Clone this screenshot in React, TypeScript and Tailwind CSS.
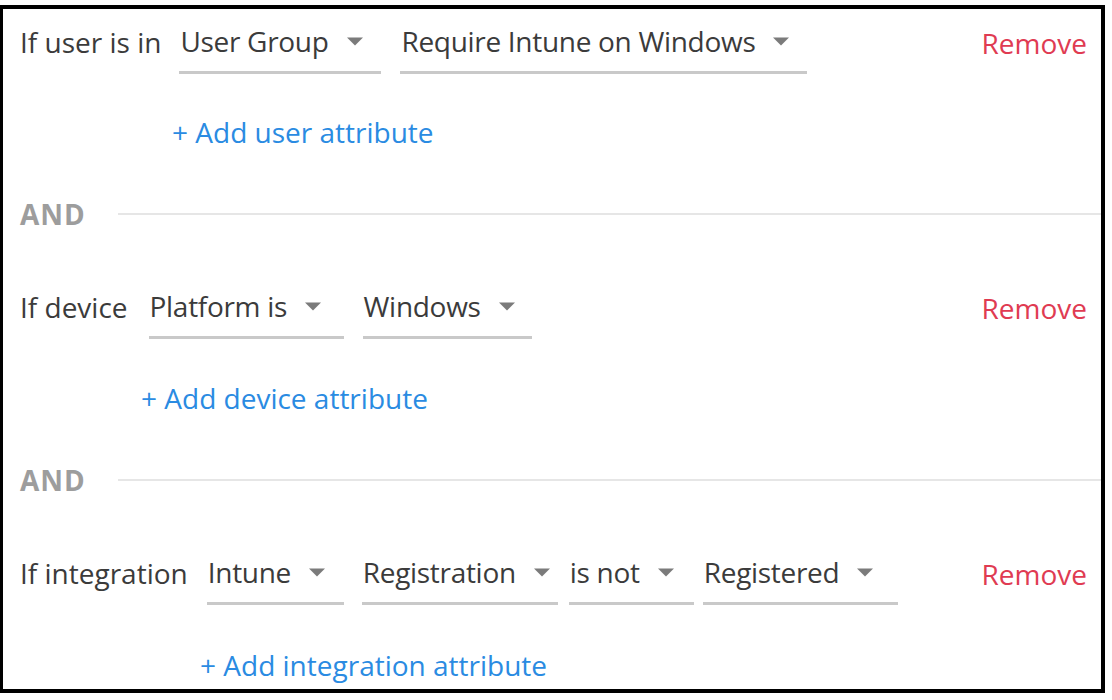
import React from "react";

const Caret = () => (
  <svg width="18" height="9" viewBox="0 0 18 9" className="ml-[17px] mt-[2px] shrink-0">
    <polygon points="1,0.5 17,0.5 9,8.5" fill="#7b7b7b" />
  </svg>
);

const Dropdown = ({ value, className }: { value: string; className: string }) => (
  <div
    className={
      "flex h-[64px] shrink-0 items-center whitespace-nowrap border-b-[3px] border-[#c9c9c9] pl-px " +
      className
    }
  >
    <span className="tracking-[-0.3px]">{value}</span>
    <Caret />
  </div>
);

const Remove = () => (
  <button className="ml-auto pt-px text-[#e03b52]">Remove</button>
);

const AndDivider = ({ className }: { className: string }) => (
  <div className={"flex h-[40px] items-center pl-[17px] " + className}>
    <span className="font-bold tracking-[1px] text-[#9d9d9d]">AND</span>
    <div className="ml-[32px] h-[2px] flex-1 bg-[#e6e6e6]" />
  </div>
);

const AddLink = ({ text, className }: { text: string; className: string }) => (
  <div className={"flex h-[40px] items-center " + className}>
    <a className="text-[#2a8be2]">+ {text}</a>
  </div>
);

export default function App() {
  return (
    <div
      className="h-[700px] w-[1112px] bg-white pt-[5px] text-[28px] text-[#3b3b3b]"
      style={{ fontFamily: '"Open Sans", sans-serif' }}
    >
      <div className="flex h-[688px] w-[1105px] flex-col border-t-4 border-r-4 border-b-4 border-l-[3px] border-black">
        {/* user */}
        <div className="mt-px flex h-[64px] items-center pl-[17px] pr-[14px]">
          <span className="whitespace-nowrap">If user is in</span>
          <Dropdown value="User Group" className="ml-[18px] w-[202px]" />
          <Dropdown value="Require Intune on Windows" className="ml-[19px] w-[407px]" />
          <Remove />
        </div>
        <AddLink text="Add user attribute" className="mt-[38px] pl-[169px]" />

        <AndDivider className="mt-[42px]" />

        {/* device */}
        <div className="mt-[41px] flex h-[64px] items-center pl-[17px] pr-[14px]">
          <span className="whitespace-nowrap">If device</span>
          <Dropdown value="Platform is" className="ml-[21px] w-[195px]" />
          <Dropdown value="Windows" className="ml-[19px] w-[169px]" />
          <Remove />
        </div>
        <AddLink text="Add device attribute" className="mt-[39px] pl-[138px]" />

        <AndDivider className="mt-[42px]" />

        {/* integration */}
        <div className="mt-[41px] flex h-[64px] items-center pl-[17px] pr-[14px]">
          <span className="whitespace-nowrap">If integration</span>
          <Dropdown value="Intune" className="ml-[19px] w-[137px]" />
          <Dropdown value="Registration" className="ml-[18px] w-[196px]" />
          <Dropdown value="is not" className="ml-[11px] w-[125px]" />
          <Dropdown value="Registered" className="ml-[9px] w-[195px]" />
          <Remove />
        </div>
        <AddLink text="Add integration attribute" className="mt-[40px] pl-[197px]" />
      </div>
    </div>
  );
}
